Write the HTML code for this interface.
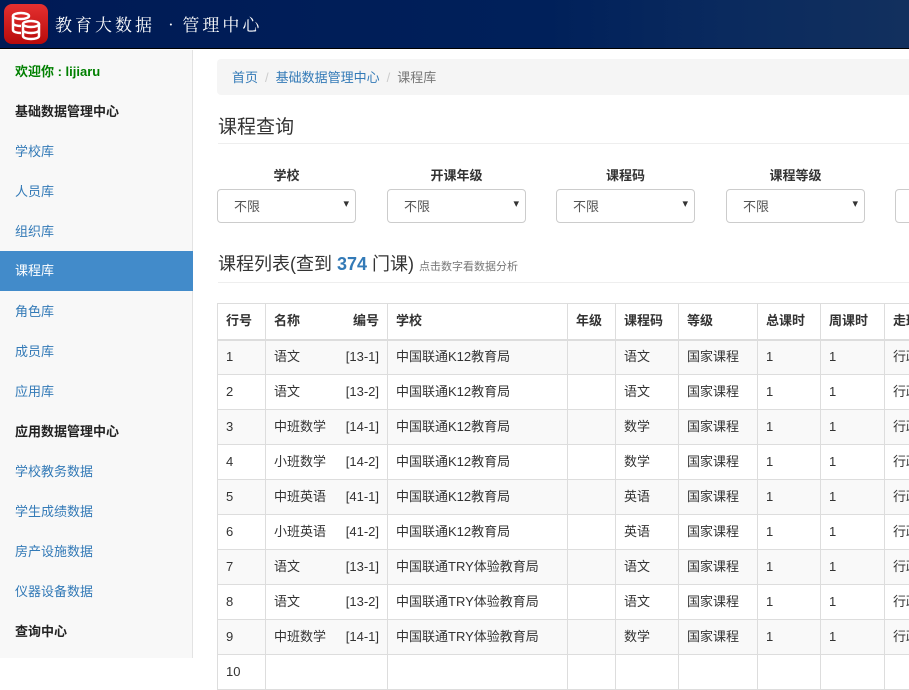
<!DOCTYPE html>
<html><head><meta charset="utf-8"><style>
*{margin:0;padding:0;box-sizing:border-box}
body{width:909px;height:658px;overflow:hidden;font-family:"Liberation Sans","Noto Sans CJK SC",sans-serif;font-size:13px;color:#333;background:#fff;position:relative}
.hdr{position:absolute;left:0;top:0;width:909px;height:49px;background:linear-gradient(90deg,#001a55 0%,#00205a 60%,#0a2a5e 80%,#12305e 100%);border-bottom:1px solid #000}
.logo{position:absolute;left:4px;top:4px;width:44px;height:40px;border-radius:8px;background:linear-gradient(#e53030,#b80b0b)}
.title{position:absolute;left:55px;top:11px;color:#fff;font-family:"Noto Serif CJK SC",serif;font-size:17px;letter-spacing:3px}
.side{position:absolute;left:0;top:50px;width:193px;height:608px;background:#f8f8f8;border-right:1px solid #e3e3e3}
.side div{position:absolute;left:15px;font-size:13px;line-height:16px;margin-top:1px}
.side .b{font-weight:bold;color:#222}
.side .l{color:#337ab7}
.side .act{left:0;width:193px;height:40px;background:#428bca;color:#fff;padding:12px 15px;margin-top:0}
.bc{position:absolute;left:217px;top:59px;width:700px;height:36px;background:#f5f5f5;border-radius:4px;padding:8px 15px;font-size:13px;color:#337ab7}
.bc span{color:#ccc;margin:0 7px}
.h1{position:absolute;left:218px;top:112px;font-size:19px;color:#333}
.hr{position:absolute;left:218px;height:1px;background:#eee;width:700px}
.lab{position:absolute;top:165px;font-weight:bold;font-size:13px;text-align:center;width:139px}
.sel{position:absolute;top:189px;width:139px;height:34px;border:1px solid #ccc;border-radius:4px;padding:6px 16px;font-size:13px;color:#555}
.sel:after{content:"▾";position:absolute;right:6px;top:7px;font-size:11px;color:#333}
.h2{position:absolute;left:218px;top:250px;font-size:18px;color:#333}
.h2 b{color:#337ab7}
.h2 small{font-size:11px;color:#777}
table{position:absolute;left:217px;top:303px;border-collapse:collapse;font-size:13px;table-layout:fixed;width:720px}
td,th{border:1px solid #ddd;height:35px;padding:0 8px;text-align:left;white-space:nowrap;overflow:hidden;vertical-align:middle;line-height:16px}
th{height:36px;border-bottom:2px solid #ddd}
tr:nth-child(even) td{background:#f9f9f9}
.r{display:flex;justify-content:space-between;align-items:center;line-height:16px;height:16px}
</style></head><body>
<div class="hdr"><div class="logo">
<svg width="44" height="40"><g fill="none" stroke="#fff" stroke-width="2.5"><ellipse cx="17" cy="12" rx="8" ry="3"/><path d="M9 12v14c0 2 4 3 8 3M9 19c0 2 4 3 8 3"/><ellipse cx="27" cy="20" rx="8" ry="3"/><path d="M19 20v12c0 2 4 3 8 3s8-1 8-3V20M19 26c0 2 4 3 8 3s8-1 8-3"/></g></svg></div>
<div class="title">教育大数据 •管理中心</div></div>
<div class="side">
<div style="top:13px;color:#008000;font-weight:bold">欢迎你 : lijiaru</div>
<div class="b" style="top:53px">基础数据管理中心</div>
<div class="l" style="top:93px">学校库</div>
<div class="l" style="top:133px">人员库</div>
<div class="l" style="top:173px">组织库</div>
<div class="act" style="top:201px">课程库</div>
<div class="l" style="top:253px">角色库</div>
<div class="l" style="top:293px">成员库</div>
<div class="l" style="top:333px">应用库</div>
<div class="b" style="top:373px">应用数据管理中心</div>
<div class="l" style="top:413px">学校教务数据</div>
<div class="l" style="top:453px">学生成绩数据</div>
<div class="l" style="top:493px">房产设施数据</div>
<div class="l" style="top:533px">仪器设备数据</div>
<div class="b" style="top:573px">查询中心</div>
</div>
<div class="bc">首页<span>/</span>基础数据管理中心<span>/</span><i style="font-style:normal;color:#777">课程库</i></div>
<div class="h1">课程查询</div>
<div class="hr" style="top:143px"></div>
<div class="lab" style="left:217px">学校</div><div class="sel" style="left:217px">不限</div>
<div class="lab" style="left:387px">开课年级</div><div class="sel" style="left:387px">不限</div>
<div class="lab" style="left:556px">课程码</div><div class="sel" style="left:556px">不限</div>
<div class="lab" style="left:726px">课程等级</div><div class="sel" style="left:726px">不限</div>
<div class="sel" style="left:895px"></div>
<div class="h2">课程列表(查到 <b>374</b> 门课) <small>点击数字看数据分析</small></div>
<div class="hr" style="top:282px"></div>
<table>
<colgroup><col style="width:48px"><col style="width:122px"><col style="width:180px"><col style="width:48px"><col style="width:63px"><col style="width:79px"><col style="width:63px"><col style="width:64px"><col style="width:53px"></colgroup>
<tr><th>行号</th><th><div class="r"><span>名称</span><span>编号</span></div></th><th>学校</th><th>年级</th><th>课程码</th><th>等级</th><th>总课时</th><th>周课时</th><th>走班</th></tr>
<tr><td>1</td><td><div class="r"><span>语文</span><span>[13-1]</span></div></td><td>中国联通K12教育局</td><td></td><td>语文</td><td>国家课程</td><td>1</td><td>1</td><td>行政</td></tr>
<tr><td>2</td><td><div class="r"><span>语文</span><span>[13-2]</span></div></td><td>中国联通K12教育局</td><td></td><td>语文</td><td>国家课程</td><td>1</td><td>1</td><td>行政</td></tr>
<tr><td>3</td><td><div class="r"><span>中班数学</span><span>[14-1]</span></div></td><td>中国联通K12教育局</td><td></td><td>数学</td><td>国家课程</td><td>1</td><td>1</td><td>行政</td></tr>
<tr><td>4</td><td><div class="r"><span>小班数学</span><span>[14-2]</span></div></td><td>中国联通K12教育局</td><td></td><td>数学</td><td>国家课程</td><td>1</td><td>1</td><td>行政</td></tr>
<tr><td>5</td><td><div class="r"><span>中班英语</span><span>[41-1]</span></div></td><td>中国联通K12教育局</td><td></td><td>英语</td><td>国家课程</td><td>1</td><td>1</td><td>行政</td></tr>
<tr><td>6</td><td><div class="r"><span>小班英语</span><span>[41-2]</span></div></td><td>中国联通K12教育局</td><td></td><td>英语</td><td>国家课程</td><td>1</td><td>1</td><td>行政</td></tr>
<tr><td>7</td><td><div class="r"><span>语文</span><span>[13-1]</span></div></td><td>中国联通TRY体验教育局</td><td></td><td>语文</td><td>国家课程</td><td>1</td><td>1</td><td>行政</td></tr>
<tr><td>8</td><td><div class="r"><span>语文</span><span>[13-2]</span></div></td><td>中国联通TRY体验教育局</td><td></td><td>语文</td><td>国家课程</td><td>1</td><td>1</td><td>行政</td></tr>
<tr><td>9</td><td><div class="r"><span>中班数学</span><span>[14-1]</span></div></td><td>中国联通TRY体验教育局</td><td></td><td>数学</td><td>国家课程</td><td>1</td><td>1</td><td>行政</td></tr>
<tr><td>10</td><td></td><td></td><td></td><td></td><td></td><td></td><td></td><td></td></tr>
</table>
</body></html>
